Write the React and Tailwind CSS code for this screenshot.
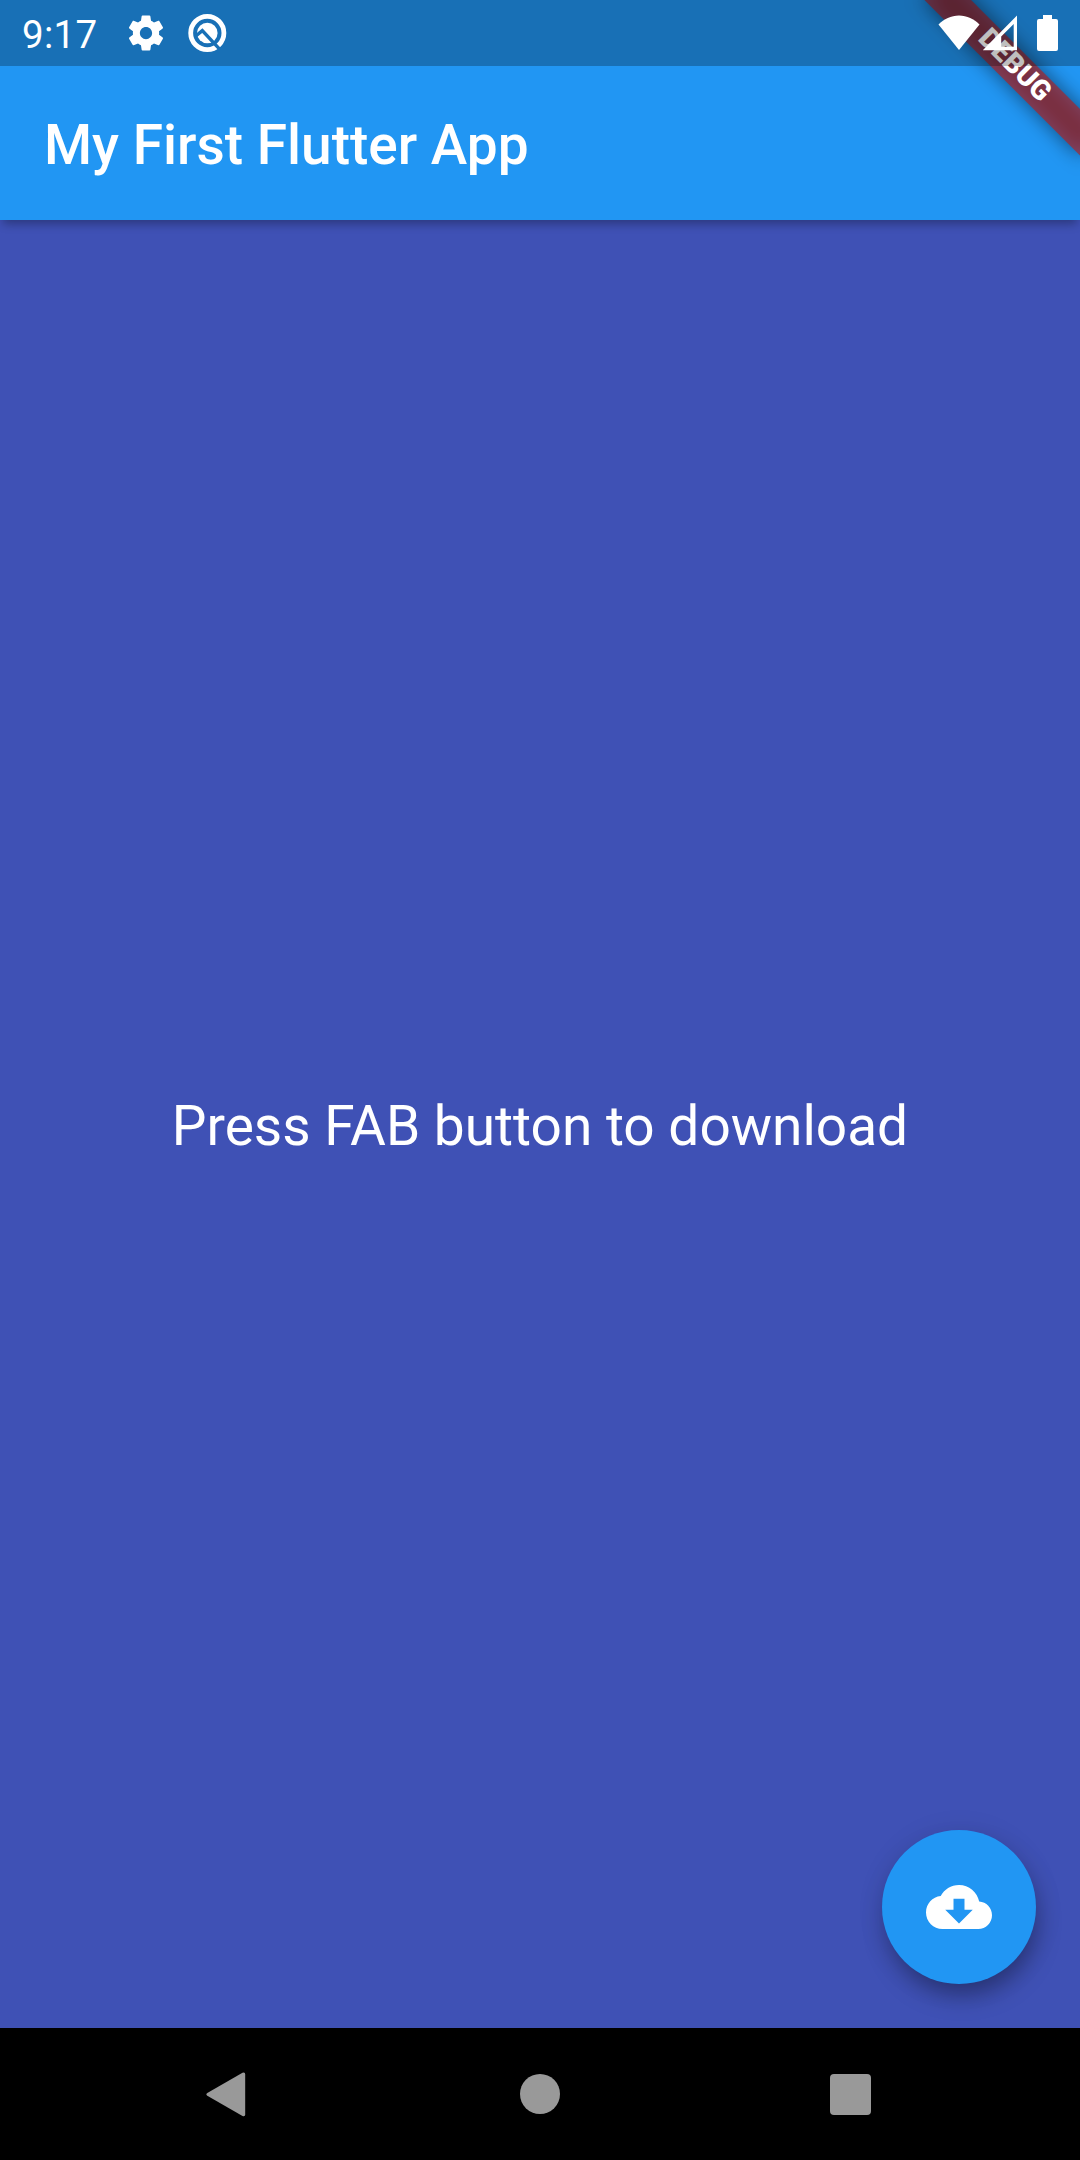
import React from "react";

function StatusBar() {
  return (
    <div className="relative z-20 flex h-[66px] w-full items-center bg-black/25">
      <span className="ml-[22px] w-[76px] pt-[3px] text-[38.5px] leading-[66px] tracking-[0.3px]">9:17</span>
      <svg className="ml-[27px] size-[42px] shrink-0" viewBox="0 0 24 24" fill="currentColor">
        <path d="M19.43 12.98c.04-.32.07-.64.07-.98s-.03-.66-.07-.98l2.11-1.65c.19-.15.24-.42.12-.64l-2-3.46c-.12-.22-.39-.3-.61-.22l-2.49 1c-.52-.4-1.08-.73-1.69-.98l-.38-2.65C14.46 2.18 14.25 2 14 2h-4c-.25 0-.46.18-.49.42l-.38 2.65c-.61.25-1.17.59-1.69.98l-2.49-1c-.23-.09-.49 0-.61.22l-2 3.46c-.13.22-.07.49.12.64l2.11 1.65c-.04.32-.07.65-.07.98s.03.66.07.98l-2.11 1.65c-.19.15-.24.42-.12.64l2 3.46c.12.22.39.3.61.22l2.49-1c.52.4 1.08.73 1.69.98l.38 2.65c.03.24.24.42.49.42h4c.25 0 .46-.18.49-.42l.38-2.65c.61-.25 1.17-.59 1.69-.98l2.49 1c.23.09.49 0 .61-.22l2-3.46c.12-.22.07-.49-.12-.64l-2.11-1.65zM12 15.5c-1.93 0-3.5-1.57-3.5-3.5s1.57-3.5 3.5-3.5 3.5 1.57 3.5 3.5-1.57 3.5-3.5 3.5z" />
      </svg>
      <svg className="ml-[20px] size-[40px] shrink-0" viewBox="0 0 40 40" fill="none">
        <mask id="q-cut" maskUnits="userSpaceOnUse" x="0" y="0" width="40" height="40">
          <rect width="40" height="40" fill="white" />
          <path d="M8.5 23.2 15.3 17.6 33.5 37.2" stroke="black" strokeWidth="3.4" />
        </mask>
        <g mask="url(#q-cut)">
          <circle cx="20.3" cy="20" r="16.6" stroke="currentColor" strokeWidth="4.8" />
          <circle cx="20.3" cy="20" r="10.3" fill="currentColor" />
        </g>
      </svg>
      <div className="ml-auto mr-[22px] flex items-center">
        <svg className="h-[36px] w-[42px]" viewBox="0 0 42 36" fill="currentColor">
          <path d="M21 35 0.5 9.5C6 4 13 0.5 21 0.5S36 4 41.5 9.5Z" />
        </svg>
        <svg className="ml-[3px] h-[36px] w-[36px]" viewBox="0 0 36 36" fill="currentColor">
          <path fillRule="evenodd" d="M-.3 35.3 34 0.5V35.3ZM18.2 31.8H30.7V9L18.2 21.6Z" />
        </svg>
        <svg className="ml-[18px] h-[36px] w-[21px]" viewBox="0 0 21 36" fill="currentColor">
          <path d="M6 0h9v4h4a2 2 0 0 1 2 2v28a2 2 0 0 1-2 2H2a2 2 0 0 1-2-2V6a2 2 0 0 1 2-2h4Z" />
        </svg>
      </div>
    </div>
  );
}

function DebugBanner() {
  return (
    <div className="absolute right-0 top-0 z-10 size-[220px] overflow-hidden">
      <div className="absolute left-[110px] top-[77px] h-[33px] w-[220px] origin-[110px_-77px] rotate-45">
        <div className="absolute inset-0 bg-black/50 blur-[10px]" />
        <div className="absolute inset-0 bg-[#b71c1c]/63 text-center text-[28px] font-black leading-[29px]">
          DEBUG
        </div>
      </div>
    </div>
  );
}

function AppBar() {
  return (
    <header className="relative z-10 bg-[#2196f3] shadow-[0_7px_9px_-3px_rgba(0,0,0,0.3)]">
      <DebugBanner />
      <StatusBar />
      <div className="flex h-[154px] items-center px-[44px] pt-[4px]">
        <h1 className="whitespace-nowrap text-[55px] font-medium leading-[64px]">My First Flutter App</h1>
      </div>
    </header>
  );
}

function NavBar() {
  return (
    <nav className="flex h-[132px] items-center bg-black text-[#999999]">
      <svg className="ml-[205px] mt-px h-[45px] w-[41px]" viewBox="0 0 41 46" preserveAspectRatio="none" fill="currentColor">
        <path d="M2.3 21.4 37.5.8Q40.2-.3 40.2 2.5V43.3Q40.2 46 37.5 44.9L2.3 24.3Q.3 22.8 2.3 21.4Z" />
      </svg>
      <div className="ml-[274px] size-[40px] rounded-full bg-[#999999]" />
      <div className="ml-[270px] mt-px size-[41px] rounded-[4px] bg-[#999999]" />
    </nav>
  );
}

export default function App() {
  return (
    <div className="flex h-[2160px] w-[1080px] flex-col overflow-hidden bg-[#3f51b5] font-['Roboto',sans-serif] text-white">
      <AppBar />
      <main className="relative flex flex-1 items-center justify-center pt-[4px]">
        <p className="whitespace-nowrap text-[55px] leading-[64px]">Press FAB button to download</p>
        <button className="absolute bottom-[44px] right-[44px] flex size-[154px] items-center justify-center rounded-full bg-[#2196f3] shadow-[3px_14px_24px_-3px_rgba(0,0,0,0.34),1px_3px_30px_rgba(0,0,0,0.08)]">
          <svg className="size-[66px]" viewBox="0 0 24 24" fill="currentColor">
            <path d="M19.35 10.04C18.67 6.59 15.64 4 12 4 9.11 4 6.6 5.64 5.35 8.04 2.34 8.36 0 10.91 0 14c0 3.31 2.69 6 6 6h13c2.76 0 5-2.24 5-5 0-2.64-2.05-4.78-4.65-4.96zM17 13l-5 5-5-5h3V9h4v4h3z" />
          </svg>
        </button>
      </main>
      <NavBar />
    </div>
  );
}
